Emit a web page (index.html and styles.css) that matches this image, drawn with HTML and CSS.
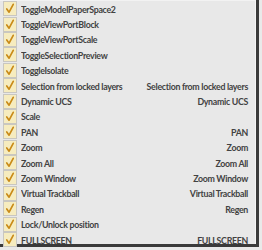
FILE: index.html
```html
<!DOCTYPE html>
<html>
<head>
<meta charset="utf-8">
<link rel="stylesheet" href="styles.css">
</head>
<body>
<div class="panel">
  <div class="row"><span class="cb"><svg viewBox="0 0 13 14"><path d="M3 7.5 L5.5 11 L10 2.5" /></svg></span><span class="name">ToggleModelPaperSpace2</span><span class="key"></span></div>
  <div class="row"><span class="cb"><svg viewBox="0 0 13 14"><path d="M3 7.5 L5.5 11 L10 2.5" /></svg></span><span class="name">ToggleViewPortBlock</span><span class="key"></span></div>
  <div class="row"><span class="cb"><svg viewBox="0 0 13 14"><path d="M3 7.5 L5.5 11 L10 2.5" /></svg></span><span class="name">ToggleViewPortScale</span><span class="key"></span></div>
  <div class="row"><span class="cb"><svg viewBox="0 0 13 14"><path d="M3 7.5 L5.5 11 L10 2.5" /></svg></span><span class="name">ToggleSelectionPreview</span><span class="key"></span></div>
  <div class="row"><span class="cb"><svg viewBox="0 0 13 14"><path d="M3 7.5 L5.5 11 L10 2.5" /></svg></span><span class="name">ToggleIsolate</span><span class="key"></span></div>
  <div class="row"><span class="cb"><svg viewBox="0 0 13 14"><path d="M3 7.5 L5.5 11 L10 2.5" /></svg></span><span class="name">Selection from locked layers</span><span class="key">Selection from locked layers</span></div>
  <div class="row"><span class="cb"><svg viewBox="0 0 13 14"><path d="M3 7.5 L5.5 11 L10 2.5" /></svg></span><span class="name">Dynamic UCS</span><span class="key">Dynamic UCS</span></div>
  <div class="row"><span class="cb"><svg viewBox="0 0 13 14"><path d="M3 7.5 L5.5 11 L10 2.5" /></svg></span><span class="name">Scale</span><span class="key"></span></div>
  <div class="row"><span class="cb"><svg viewBox="0 0 13 14"><path d="M3 7.5 L5.5 11 L10 2.5" /></svg></span><span class="name">PAN</span><span class="key">PAN</span></div>
  <div class="row"><span class="cb"><svg viewBox="0 0 13 14"><path d="M3 7.5 L5.5 11 L10 2.5" /></svg></span><span class="name">Zoom</span><span class="key">Zoom</span></div>
  <div class="row"><span class="cb"><svg viewBox="0 0 13 14"><path d="M3 7.5 L5.5 11 L10 2.5" /></svg></span><span class="name">Zoom All</span><span class="key">Zoom All</span></div>
  <div class="row"><span class="cb"><svg viewBox="0 0 13 14"><path d="M3 7.5 L5.5 11 L10 2.5" /></svg></span><span class="name">Zoom Window</span><span class="key">Zoom Window</span></div>
  <div class="row"><span class="cb"><svg viewBox="0 0 13 14"><path d="M3 7.5 L5.5 11 L10 2.5" /></svg></span><span class="name">Virtual Trackball</span><span class="key">Virtual Trackball</span></div>
  <div class="row"><span class="cb"><svg viewBox="0 0 13 14"><path d="M3 7.5 L5.5 11 L10 2.5" /></svg></span><span class="name">Regen</span><span class="key">Regen</span></div>
  <div class="row"><span class="cb"><svg viewBox="0 0 13 14"><path d="M3 7.5 L5.5 11 L10 2.5" /></svg></span><span class="name">Lock/Unlock position</span><span class="key"></span></div>
  <div class="row"><span class="cb"><svg viewBox="0 0 13 14"><path d="M3 7.5 L5.5 11 L10 2.5" /></svg></span><span class="name">FULLSCREEN</span><span class="key">FULLSCREEN</span></div>
</div>
</body>
</html>
```

FILE: styles.css
```css
html, body {
  margin: 0;
  padding: 0;
  background: #e9e9e9;
}
.panel {
  width: 259px;
  height: 247px;
  box-sizing: border-box;
  background: #e8e8e8;
  border-right: 3px solid #3a3a3a;
  border-bottom: 3px solid #3a3a3a;
  padding-top: 1px;
  display: flex;
  flex-direction: column;
  font-family: Lato, "Liberation Sans", sans-serif;
  font-size: 8.8px;
  font-weight: 700;
  letter-spacing: -0.3px;
  color: #424242;
  box-shadow: inset -1px 0 0 #f4f4f4, inset 0 1px 0 #f2f2f2;
}
.row {
  height: 15.4px;
  display: grid;
  grid-template-columns: 21px 1fr auto;
  align-items: center;
  flex: none;
}
.cb {
  width: 12px;
  height: 13px;
  margin-left: 3px;
  background: #f6ecbf;
  border: 1px solid #c9c7c0;
  display: flex;
  align-items: center;
  justify-content: center;
}
.cb svg {
  width: 12px;
  height: 13px;
}
.cb path {
  fill: none;
  stroke: #c98a17;
  stroke-width: 1.8;
  stroke-linecap: round;
  stroke-linejoin: round;
}
.name {
  white-space: nowrap;
  overflow: hidden;
  padding-top: 1px;
}
.key {
  white-space: nowrap;
  padding-right: 8px;
  padding-top: 1px;
  text-align: right;
}
```
